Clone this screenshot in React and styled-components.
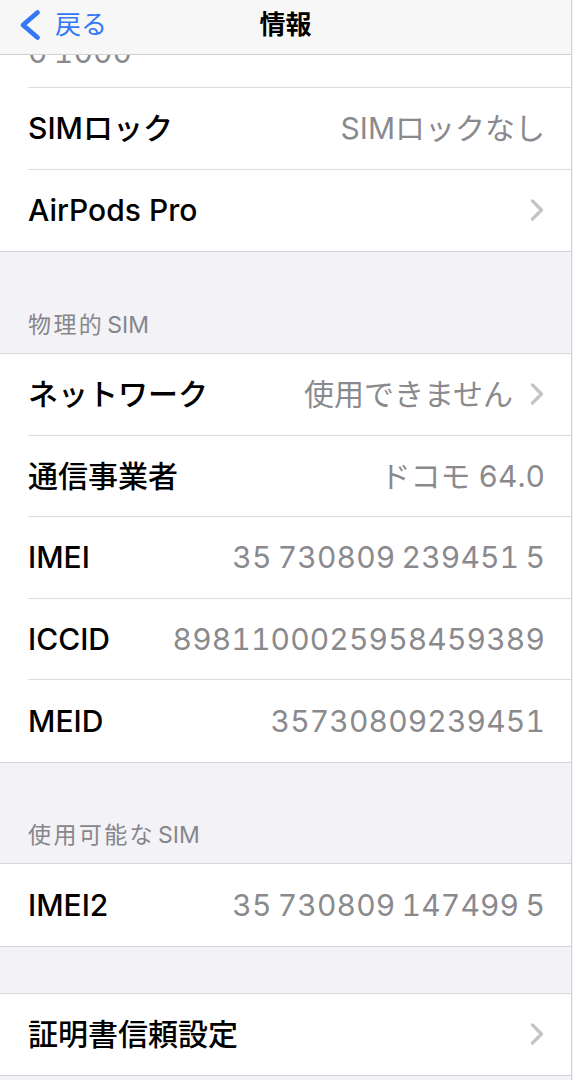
import React from "react";
import styled, { createGlobalStyle } from "styled-components";

const GlobalStyle = createGlobalStyle`
  html, body {
    margin: 0;
    padding: 0;
    background: #f2f2f7;
  }
  body {
    font-family: "Inter", "Noto Sans CJK JP", sans-serif;
    -webkit-font-smoothing: antialiased;
  }
`;

const Screen = styled.div`
  width: 571px;
  min-height: 1080px;
  background: #f2f2f7;
  border-right: 1px solid #d2d2d4;
  overflow: hidden;
`;

const NavBar = styled.header`
  box-sizing: border-box;
  height: 55px;
  padding: 0 0 5px;
  display: grid;
  grid-template-columns: 1fr auto 1fr;
  align-items: center;
  background: #f7f7f7;
  border-bottom: 1px solid #cfcfd1;
`;

const BackButton = styled.div`
  display: flex;
  align-items: center;
  gap: 11px;
  padding-left: 16px;
  color: #3478f6;
  font-size: 26px;
  line-height: 30px;
`;

const NavTitle = styled.div`
  font-size: 26px;
  font-weight: 700;
  color: #000;
  line-height: 30px;
`;

const Group = styled.section`
  background: #fff;
  border-top: ${(p) => (p.$noTop ? "none" : "1px solid #d6d6d8")};
  border-bottom: 1px solid #d6d6d8;
`;

const Row = styled.div`
  box-sizing: border-box;
  height: ${(p) => p.$h || "81.5px"};
  padding-left: 28px;
  overflow: hidden;
  &:last-child > div {
    border-bottom: none;
  }
`;

const RowInner = styled.div`
  box-sizing: border-box;
  height: 100%;
  display: flex;
  align-items: center;
  justify-content: space-between;
  gap: 16px;
  padding-right: 26px;
  border-bottom: 1px solid #dcdcde;
`;

const ClippedInner = styled(RowInner)`
  align-items: flex-start;
`;

const ClipWindow = styled.div`
  height: 8px;
  overflow: hidden;
`;

const Label = styled.span`
  font-size: 30px;
  font-weight: 500;
  line-height: 36px;
  color: #000;
  white-space: nowrap;
`;

const Value = styled.span`
  display: flex;
  align-items: center;
  gap: 16px;
  font-size: 30px;
  line-height: 36px;
  color: #8a8a8e;
  white-space: nowrap;
  letter-spacing: ${(p) => (p.$digits ? "0.15px" : "0")};
  word-spacing: ${(p) => (p.$digits ? "-2px" : "0")};
  font-variant-numeric: tabular-nums;
`;

const ClippedValue = styled(Value)`
  margin-top: -21px;
`;

const SectionHeader = styled.div`
  box-sizing: border-box;
  height: ${(p) => p.$h};
  display: flex;
  align-items: flex-end;
  gap: 3px;
  padding: 0 28px 14px;
  font-size: 23px;
  line-height: 28px;
  color: #86868b;
`;

const HeaderKana = styled.span`
  letter-spacing: 2.4px;
`;

const Spacer = styled.div`
  height: ${(p) => p.$h};
`;

const Chevron = () => (
  <svg width="16" height="24" viewBox="0 0 16 24" fill="none">
    <path
      d="M3.5 3 L12.5 12 L3.5 21"
      stroke="#c4c4c7"
      strokeWidth="3.4"
      strokeLinecap="round"
      strokeLinejoin="round"
    />
  </svg>
);

const BackChevron = () => (
  <svg width="28" height="32" viewBox="0 0 28 32" fill="none">
    <path
      d="M21.5 3.5 L7 16 L21.5 28.5"
      stroke="#3478f6"
      strokeWidth="4.8"
      strokeLinecap="round"
      strokeLinejoin="round"
    />
  </svg>
);

const InfoRow = ({ label, value, chevron, digits }) => (
  <Row>
    <RowInner>
      <Label>{label}</Label>
      <Value $digits={digits}>
        {value}
        {chevron && <Chevron />}
      </Value>
    </RowInner>
  </Row>
);

export default function App() {
  return (
    <>
      <GlobalStyle />
      <Screen>
        <NavBar>
          <BackButton>
            <BackChevron />
            <span>戻る</span>
          </BackButton>
          <NavTitle>情報</NavTitle>
          <div />
        </NavBar>

        <Group $noTop>
          <Row $h="33px">
            <ClippedInner>
              <ClipWindow>
                <ClippedValue $digits>0 1000</ClippedValue>
              </ClipWindow>
            </ClippedInner>
          </Row>
          <InfoRow label="SIMロック" value="SIMロックなし" />
          <InfoRow label="AirPods Pro" chevron />
        </Group>

        <SectionHeader $h="101px">
          <HeaderKana>物理的</HeaderKana>
          <span>SIM</span>
        </SectionHeader>
        <Group>
          <InfoRow label="ネットワーク" value="使用できません" chevron />
          <InfoRow label="通信事業者" value="ドコモ 64.0" />
          <InfoRow label="IMEI" value="35 730809 239451 5" digits />
          <InfoRow label="ICCID" value="8981100025958459389" digits />
          <InfoRow label="MEID" value="35730809239451" digits />
        </Group>

        <SectionHeader $h="100.5px">
          <HeaderKana>使用可能な</HeaderKana>
          <span>SIM</span>
        </SectionHeader>
        <Group>
          <InfoRow label="IMEI2" value="35 730809 147499 5" digits />
        </Group>

        <Spacer $h="46px" />
        <Group>
          <InfoRow label="証明書信頼設定" chevron />
        </Group>
      </Screen>
    </>
  );
}
